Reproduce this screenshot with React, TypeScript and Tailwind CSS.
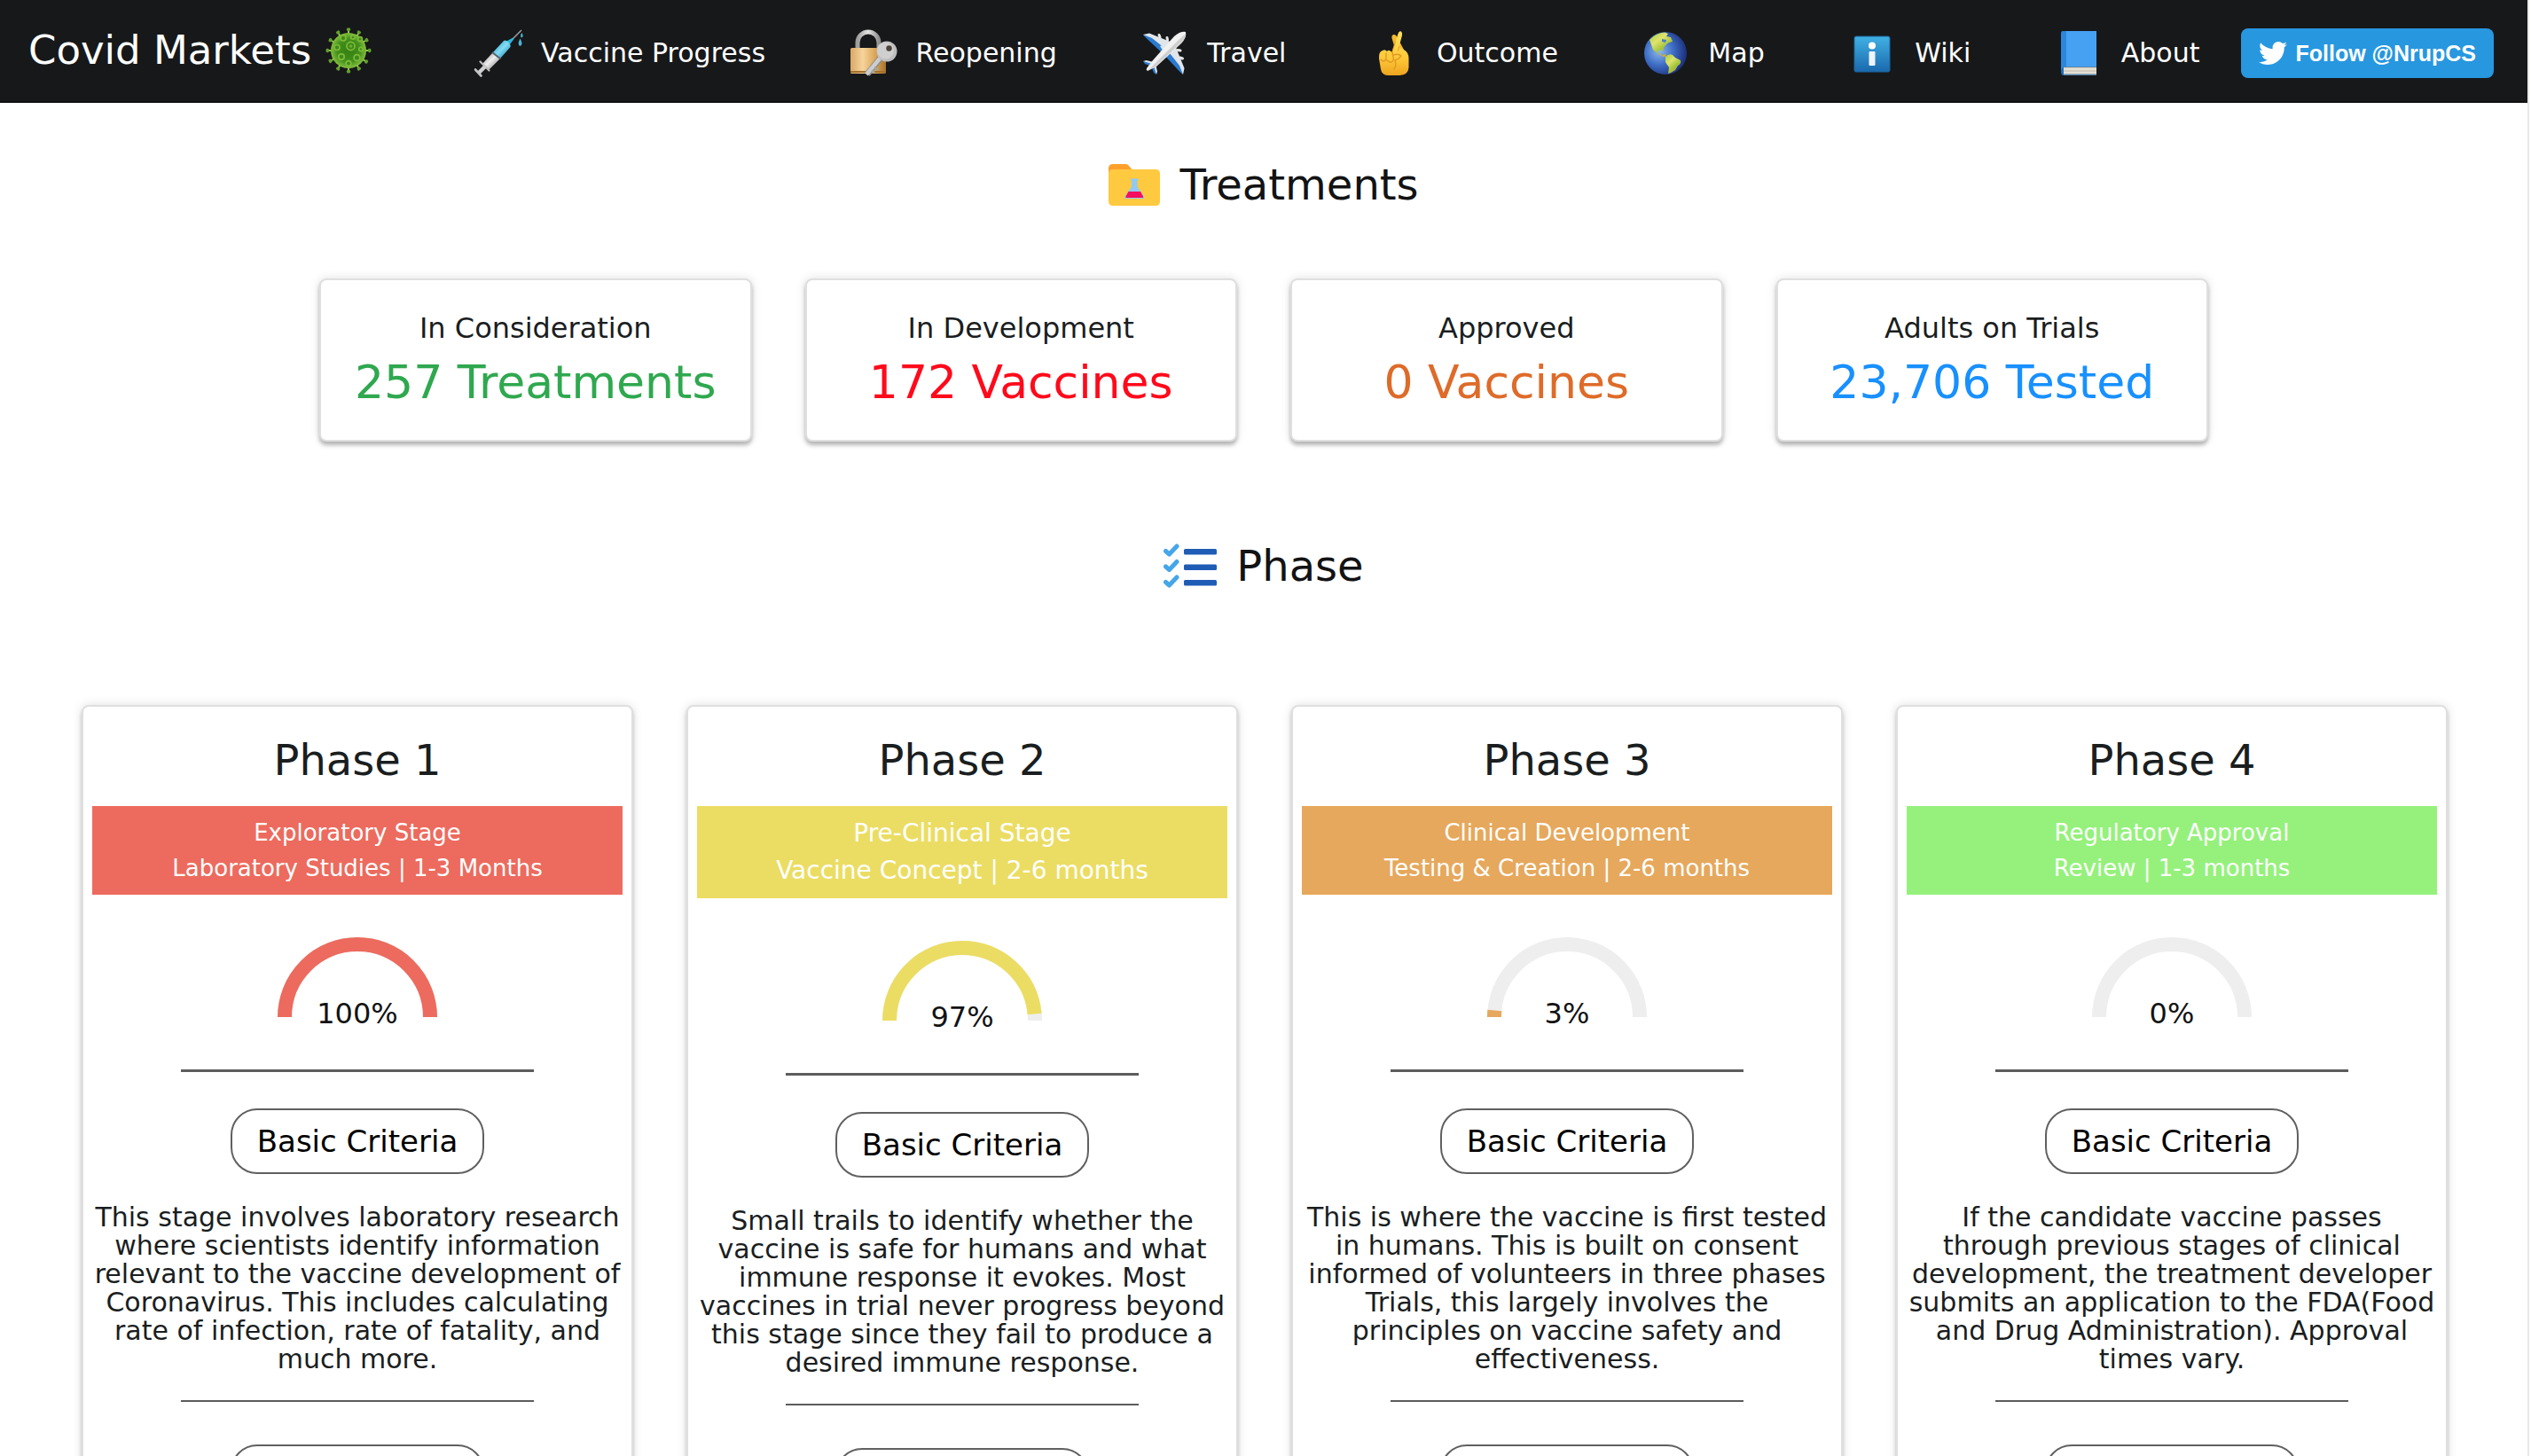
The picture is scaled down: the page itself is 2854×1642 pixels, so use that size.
import React from 'react';
import { FaTwitter } from 'react-icons/fa';

function VirusIcon() {
  const spikes = [0, 30, 60, 90, 122, 150, 180, 210, 240, 270, 300, 330];
  const rings: [number, number, number][] = [
    [28.5, 21, 4.6], [20, 12, 3], [31, 11, 2.2], [39, 13, 2.4], [13, 22.5, 3],
    [40, 24.5, 2.2], [18, 33, 3.2], [35.5, 34, 3.4], [26, 40.5, 2.8],
  ];
  return (
    <svg viewBox="0 0 52 52" className="size-[52px] shrink-0" aria-hidden="true">
      <defs>
        <radialGradient id="virus">
          <stop offset="0" stopColor="#347f12" />
          <stop offset="0.65" stopColor="#43901b" />
          <stop offset="1" stopColor="#83bf3d" />
        </radialGradient>
      </defs>
      {spikes.map((a) => (
        <g key={a} transform={`rotate(${a} 26 26)`}>
          <path d="M26 8V3" stroke="#8fc34d" strokeWidth="2" />
          <rect x="23.8" y="0.6" width="4.4" height="3.4" rx="1.4" fill="#629f2f" />
        </g>
      ))}
      <circle cx="26" cy="26" r="20" fill="url(#virus)" />
      {rings.map(([x, y, r]) => (
        <circle key={`${x}-${y}`} cx={x} cy={y} r={r} fill="#3d8b18" stroke="#7fba3a" strokeWidth="1.7" />
      ))}
      <circle cx="28.5" cy="21" r="1.8" fill="#6fae32" />
    </svg>
  );
}

function Icon({ children }: { children: React.ReactNode }) {
  return (
    <svg viewBox="0 0 60 60" className="size-[60px] shrink-0" aria-hidden="true">
      {children}
    </svg>
  );
}

const SyringeIcon = () => (
  <Icon>
    <defs>
      <linearGradient id="barrel" x1="0.25" y1="0.25" x2="0.75" y2="0.75">
        <stop offset="0" stopColor="#b9b9b9" />
        <stop offset="0.45" stopColor="#efefef" />
        <stop offset="1" stopColor="#a9a9a9" />
      </linearGradient>
      <linearGradient id="fluid" x1="0.25" y1="0.25" x2="0.75" y2="0.75">
        <stop offset="0" stopColor="#4ab8dc" />
        <stop offset="0.5" stopColor="#84dcf2" />
        <stop offset="1" stopColor="#3fa9cf" />
      </linearGradient>
    </defs>
    <path d="M56 4L43 17" stroke="#9a9a9a" strokeWidth="1.6" />
    <path d="M46.5 12.5L47.5 14L43 20L39 16.5Z" fill="#2fb4da" />
    <path d="M36 16Q38 14.5 41 17.5Q44.5 20.5 43.5 23L32 36L23.5 29.5Z" fill="url(#fluid)" />
    <path d="M23.5 29.5L32 36L19.5 48.5L11.5 42.5Z" fill="url(#barrel)" />
    <path d="M23 29L32.5 36.5" stroke="#56616a" strokeWidth="2" />
    <path d="M9.5 39.5L19.5 49.5" stroke="#bcbcbc" strokeWidth="2.2" strokeLinecap="round" />
    <path d="M15 45L7.5 52.5" stroke="#d0d0d0" strokeWidth="4.5" />
    <path d="M4 48.5L10.5 55.5" stroke="#c4c4c4" strokeWidth="2.6" strokeLinecap="round" />
    <path d="M56.3 7Q59 11 56.3 12.5Q53.8 11.5 56.3 7Z" fill="#4bb4d8" />
    <path d="M54.5 13.5Q58.5 20 54.5 22Q50.8 20.5 54.5 13.5Z" fill="#4bb4d8" />
  </Icon>
);

const LockIcon = () => (
  <Icon>
    <defs>
      <linearGradient id="brass">
        <stop offset="0" stopColor="#d9a866" />
        <stop offset="0.35" stopColor="#f6d49c" />
        <stop offset="0.7" stopColor="#d9a556" />
        <stop offset="1" stopColor="#a8722b" />
      </linearGradient>
      <linearGradient id="steel">
        <stop offset="0" stopColor="#9d9d9d" />
        <stop offset="0.5" stopColor="#e4e4e4" />
        <stop offset="1" stopColor="#8f8f8f" />
      </linearGradient>
    </defs>
    <path d="M12 26V18A12 12 0 0 1 36 18V26" fill="none" stroke="url(#steel)" strokeWidth="5" />
    <rect x="4" y="24" width="40" height="29" rx="1.5" fill="url(#brass)" />
    <path d="M4 51h40" stroke="#a36f2a" strokeWidth="2" />
    <path d="M39 34L23 53.5" stroke="#8d8d8d" strokeWidth="7" />
    <path d="M39.5 33L22 54" stroke="#cdcdcd" strokeWidth="4.5" />
    <path d="M31 46l4 3M28 49.5l3 2.5" stroke="#a5a5a5" strokeWidth="2.5" />
    <circle cx="45" cy="28" r="11.5" fill="#bdbdbd" />
    <circle cx="43.5" cy="27" r="9.5" fill="#cfcfcf" />
    <circle cx="47.5" cy="24.5" r="3.2" fill="#4a4238" />
  </Icon>
);

const PlaneIcon = () => (
  <Icon>
    <path d="M6 9L13 7.5L44 20L38 35L32 31Z" fill="#dfe5ea" />
    <path d="M6 9L9 12.5L31 33L35 28L16 13Z" fill="#2a7bd0" />
    <path d="M51 54L52.5 47L40 16L25 22L29 28Z" fill="#dfe5ea" />
    <path d="M51 54L47.5 51L27 29L32 25L47 44Z" fill="#2a7bd0" />
    <path d="M6 39L9.5 38L22 41L19 45Z" fill="#dfe5ea" />
    <path d="M6 39L8 42L18 46L19 43Z" fill="#2a7bd0" />
    <path d="M21 54L22 50.5L19 38L15 41Z" fill="#dfe5ea" />
    <path d="M21 54L18 52L14 42L17 41Z" fill="#2a7bd0" />
    <path d="M24 9.5l1 2.5M33 12.5l0.5 2.5M50.500 36l-3-1M48 27l-3-0.5" stroke="#e6e6e6" strokeWidth="3" strokeLinecap="round" />
    <path d="M54 6Q55.5 12 49 19L21 45L11 50Q9 49 10 47L17 38L41 11Q48 5 54 6Z" fill="#f1f1f1" />
    <path d="M54 8Q54.5 13 48 19L20 45L12 49L45 16Z" fill="#cfcfcf" />
  </Icon>
);

const FingersIcon = () => (
  <Icon>
    <defs>
      <linearGradient id="skin" x1="0" y1="0" x2="0" y2="1">
        <stop offset="0" stopColor="#ffe05c" />
        <stop offset="0.6" stopColor="#ffc93a" />
        <stop offset="1" stopColor="#eea41f" />
      </linearGradient>
    </defs>
    <path d="M32 28L27.5 13Q27 9.5 29.5 9Q32 8.500 33.500 12L41 26Z" fill="#f4b92e" />
    <path d="M27.5 29L34.500 8Q35.500 4.500 38 5.500Q39.500 6.500 39 10L35.500 23L41 26Q46.500 29 46.500 36V46Q46 54.500 36 55H23Q16 54.500 15 48L13 36Q12.500 28 17 27Q20 25 22 28Q24 25 27.500 29Z" fill="url(#skin)" />
    <path d="M31.500 17L28 28M35.500 23L34.500 27" fill="none" stroke="#e09a22" strokeWidth="1" strokeLinecap="round" />
    <path d="M15 37Q18 41 21 37V30M22 38Q27 43 29.500 37L28 29M29 32Q35 30 38 33Q35 37 31 38Q33 44 30 48" fill="none" stroke="#e09a22" strokeWidth="1.400" strokeLinecap="round" />
  </Icon>
);

const GlobeIcon = () => (
  <Icon>
    <defs>
      <radialGradient id="ocean" cx="0.35" cy="0.45" r="0.65">
        <stop offset="0" stopColor="#8fb9ee" />
        <stop offset="0.5" stopColor="#3f6fc6" />
        <stop offset="1" stopColor="#1c2f7c" />
      </radialGradient>
      <linearGradient id="land" x1="0" y1="0" x2="0.7" y2="1">
        <stop offset="0" stopColor="#9fce3c" />
        <stop offset="0.4" stopColor="#e0e36f" />
        <stop offset="0.7" stopColor="#a2c53a" />
        <stop offset="1" stopColor="#e09a3c" />
      </linearGradient>
    </defs>
    <circle cx="30" cy="30" r="24" fill="url(#ocean)" />
    <path d="M12 15Q19 7 29 6.5L33 8L31 11L36 12L38 17L34 18L31 20L28 24L27 28L23 26L21 29L26 32L30 31L31 34L28 34L22 31L16 26Q14 20 12 15Z" fill="url(#land)" />
    <path d="M30 34Q34 30 38 32L41 35L47 38Q48 42 44 44L41 49L36 52L33 53L34 46L30 40Z" fill="url(#land)" />
    <path d="M26 14l5 1-1 3-4-1z" fill="#4b7dd0" />
  </Icon>
);

const InfoIcon = () => (
  <Icon>
    <defs>
      <linearGradient id="info" x1="0" y1="0" x2="0" y2="1">
        <stop offset="0" stopColor="#41b1e4" />
        <stop offset="1" stopColor="#1a69ad" />
      </linearGradient>
    </defs>
    <rect x="10" y="11" width="40" height="40" rx="2" fill="url(#info)" stroke="#1b679f" strokeWidth="1" />
    <circle cx="30" cy="21.5" r="4" fill="#ffffff" />
    <rect x="26.5" y="28" width="7" height="16" rx="1" fill="#eef4fa" />
  </Icon>
);

const BookIcon = () => (
  <Icon>
    <path d="M12 5H50V55H13Q10 55 10 51V8Q10 5 12 5Z" fill="#1f6db8" />
    <path d="M13 46H50V53.5H13Z" fill="#e4e0d4" />
    <path d="M13 46H50M13 50H50M13 54H50" stroke="#b9b3a3" strokeWidth="0.8" />
    <path d="M15.5 5H50V45H15.5Z" fill="#46a1f2" />
    <path d="M10 8Q10 5 13 5H15.5V45Q12 45 11 48Q10 49 10 48Z" fill="#2c86dc" />
  </Icon>
);

const FolderIcon = () => (
  <svg viewBox="0 0 58 47" className="h-[47px] w-[58px] shrink-0" aria-hidden="true">
    <path d="M0 20V5Q0 0 5 0H19Q21 0 22.5 1.5L29 9V20Z" fill="#ffa02c" />
    <path d="M5 6H53Q58 6 58 11V42Q58 47 53 47H5Q0 47 0 42V11Q0 6 5 6Z" fill="#ffc940" />
    <path d="M25 16.5H33.5V18.5H32.5V25.5L40 36.5Q41 39 38.5 39H20Q17.5 39 18.5 36.5L26 25.5V18.5H25Z" fill="#90caf4" />
    <path d="M22.5 31H36L39 36.5Q39.5 38 38 38H20.5Q19 38 19.5 36.5Z" fill="#f50f5c" />
  </svg>
);

const ChecklistIcon = () => (
  <svg viewBox="0 0 60 51" className="h-[51px] w-[60px] shrink-0" aria-hidden="true">
    {[0, 17.5, 35].map((y) => (
      <g key={y} transform={`translate(0 ${y})`}>
        <path d="M2.5 8.5L6.5 12L15 3" fill="none" stroke="#46a6ea" strokeWidth="5" strokeLinejoin="round" strokeLinecap="round" />
        <rect x="23" y="6" width="37" height="6.5" rx="1.5" fill="#1f5cb5" />
      </g>
    ))}
  </svg>
);

const links = [
  { label: 'Vaccine Progress', icon: <SyringeIcon /> },
  { label: 'Reopening', icon: <LockIcon /> },
  { label: 'Travel', icon: <PlaneIcon /> },
  { label: 'Outcome', icon: <FingersIcon /> },
  { label: 'Map', icon: <GlobeIcon /> },
  { label: 'Wiki', icon: <InfoIcon /> },
  { label: 'About', icon: <BookIcon /> },
];

const stats = [
  { label: 'In Consideration', value: '257 Treatments', color: 'text-[#2fa84f]' },
  { label: 'In Development', value: '172 Vaccines', color: 'text-[#ff0a1b]' },
  { label: 'Approved', value: '0 Vaccines', color: 'text-[#de6b29]' },
  { label: 'Adults on Trials', value: '23,706 Tested', color: 'text-[#1890ff]' },
];

const phases = [
  {
    name: 'Phase 1',
    stage: 'Exploratory Stage',
    detail: 'Laboratory Studies | 1-3 Months',
    percent: 100,
    band: 'bg-[#ec6b5e] text-[26px] leading-[40px]',
    stroke: 'stroke-[#ec6b5e]',
    text: 'This stage involves laboratory research where scientists identify information relevant to the vaccine development of Coronavirus. This includes calculating rate of infection, rate of fatality, and much more.',
  },
  {
    name: 'Phase 2',
    stage: 'Pre-Clinical Stage',
    detail: 'Vaccine Concept | 2-6 months',
    percent: 97,
    band: 'bg-[#ebdd63] text-[28px] leading-[42px]',
    stroke: 'stroke-[#ebdd63]',
    text: 'Small trails to identify whether the vaccine is safe for humans and what immune response it evokes. Most vaccines in trial never progress beyond this stage since they fail to produce a desired immune response.',
  },
  {
    name: 'Phase 3',
    stage: 'Clinical Development',
    detail: 'Testing & Creation | 2-6 months',
    percent: 3,
    band: 'bg-[#e6a85c] text-[26px] leading-[40px]',
    stroke: 'stroke-[#e6a85c]',
    text: 'This is where the vaccine is first tested in humans. This is built on consent informed of volunteers in three phases Trials, this largely involves the principles on vaccine safety and effectiveness.',
  },
  {
    name: 'Phase 4',
    stage: 'Regulatory Approval',
    detail: 'Review | 1-3 months',
    percent: 0,
    band: 'bg-[#95f17c] text-[26px] leading-[40px]',
    stroke: 'stroke-[#95f17c]',
    text: 'If the candidate vaccine passes through previous stages of clinical development, the treatment developer submits an application to the FDA(Food and Drug Administration). Approval times vary.',
  },
];

function Gauge({ percent, stroke }: { percent: number; stroke: string }) {
  const arc = 'M8 90A82 82 0 0 1 172 90';
  return (
    <div className="mt-12 flex flex-col items-center">
      <svg viewBox="0 0 180 90" className="h-[90px] w-[180px]" aria-hidden="true">
        <path d={arc} fill="none" stroke="#eeeeee" strokeWidth="16" />
        {percent > 0 && (
          <path d={arc} fill="none" strokeWidth="16" pathLength={100} strokeDasharray={`${percent} 200`} className={stroke} />
        )}
      </svg>
      <p className="-mt-7 text-[32px] leading-[48px] text-[#121314]">{percent}%</p>
    </div>
  );
}

function PhaseCard({ phase }: { phase: (typeof phases)[number] }) {
  return (
    <article className="flex min-h-[1000px] flex-col items-center rounded-lg border-2 border-[#dfdfdf] bg-white px-[10px] pt-6 text-center text-[#1a1e1f] shadow-[0_4px_4px_rgba(0,0,0,0.2),0_0_12px_rgba(0,0,0,0.12)]">
      <h3 className="text-[48px] leading-[72px]">{phase.name}</h3>
      <div className={`mt-4 w-full py-[10px] text-white ${phase.band}`}>
        <p>{phase.stage}</p>
        <p>{phase.detail}</p>
      </div>
      <Gauge percent={phase.percent} stroke={phase.stroke} />
      <hr className="mt-[39px] h-[3px] w-2/3 border-0 bg-[#5c5c5c]" />
      <button className="mt-[41px] h-[74px] rounded-[30px] border-2 border-[#606060] px-7 text-[34px] leading-[48px] text-black">
        Basic Criteria
      </button>
      <p className="mt-[33px] text-[30px] leading-[32px]">{phase.text}</p>
      <hr className="mt-[30px] h-[2px] w-2/3 border-0 bg-[#5c5c5c]" />
      <button aria-label="More details" className="mt-12 h-[74px] w-[286px] rounded-[30px] border-2 border-[#606060]" />
    </article>
  );
}

export default function App() {
  return (
    <div className="flex h-screen overflow-hidden bg-white pr-[2px] font-['DejaVu_Sans',Verdana,sans-serif] text-[#121314]">
      <div className="min-w-0 flex-1 border-r-2 border-[#e8e8e8]">
        <header className="flex h-[116px] items-center border-b-2 border-[#0f1011] bg-[#17181a] pr-[38px] pl-8 text-white">
          <a href="#home" className="flex shrink-0 items-center gap-4 text-[45px] leading-[64px] whitespace-nowrap">
            Covid Markets
            <VirusIcon />
          </a>
          <div className="flex flex-1 items-center pt-1.5">
            <nav className="mr-[47px] ml-[113px] flex flex-1 justify-between">
              {links.map((link) => (
                <a key={link.label} href="#nav" className="flex items-center gap-[18px] text-[30px] leading-[48px] whitespace-nowrap">
                  {link.icon}
                  {link.label}
                </a>
              ))}
            </nav>
            <a
              href="#follow"
              className="flex h-14 shrink-0 items-center gap-[9px] rounded-lg bg-[#2797df] px-5 font-['Liberation_Sans',Arial,sans-serif] text-[25px] leading-[32px] font-bold whitespace-nowrap"
            >
              <FaTwitter className="size-8" />
              Follow @NrupCS
            </a>
          </div>
        </header>

        <main>
          <section className="pt-14">
            <h2 className="flex items-center justify-center gap-[22px] text-[48px] leading-[72px]">
              <FolderIcon />
              Treatments
            </h2>
            <div className="mx-auto mt-[70px] grid max-w-[2130px] grid-cols-4 gap-[60px]">
              {stats.map((stat) => (
                <article
                  key={stat.label}
                  className="rounded-lg border-2 border-[#dfdfdf] bg-white pt-[30px] pb-7 text-center shadow-[0_4px_4px_rgba(0,0,0,0.25),0_0_12px_rgba(0,0,0,0.12)]"
                >
                  <h3 className="text-[32px] leading-[48px] text-[#1a1e1f]">{stat.label}</h3>
                  <p className={`text-[52px] leading-[74px] ${stat.color}`}>{stat.value}</p>
                </article>
              ))}
            </div>
          </section>

          <section className="pt-[104px]">
            <h2 className="flex items-center justify-center gap-[22px] text-[48px] leading-[72px]">
              <ChecklistIcon />
              Phase
            </h2>
            <div className="mt-[121px] grid grid-cols-4 gap-[60px] pr-[90px] pl-[92px]">
              {phases.map((phase) => (
                <PhaseCard key={phase.name} phase={phase} />
              ))}
            </div>
          </section>
        </main>
      </div>
    </div>
  );
}
